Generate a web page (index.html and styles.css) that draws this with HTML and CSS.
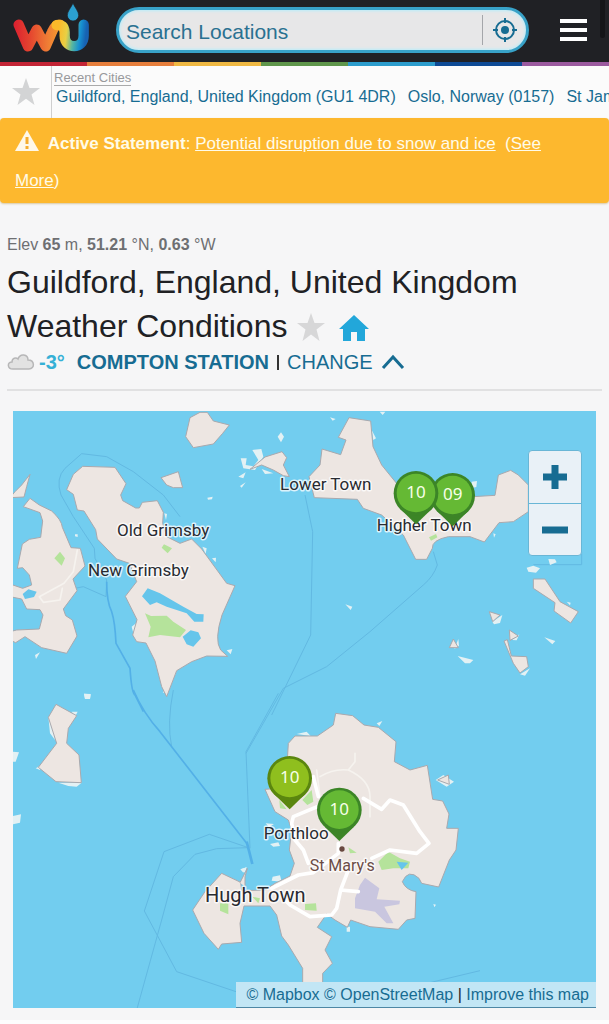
FILE: index.html
```html
<!DOCTYPE html>
<html lang="en">
<head>
<meta charset="utf-8">
<meta name="viewport" content="width=device-width, initial-scale=1">
<title>Guildford, England, United Kingdom Weather Conditions</title>
<link rel="stylesheet" href="styles.css">
</head>
<body>
<header class="header">
  <a class="logo" href="#" aria-label="Weather Underground">
    <svg width="80" height="52" viewBox="36 2 240 156" fill="none" stroke-width="31" stroke-linecap="round" stroke-linejoin="round">
      <defs>
        <linearGradient id="gw" gradientUnits="userSpaceOnUse" x1="45" y1="0" x2="195" y2="0"><stop offset="0" stop-color="#dc2230"/><stop offset=".3" stop-color="#e5452f"/><stop offset=".65" stop-color="#ef7c35"/><stop offset="1" stop-color="#f8a92d"/></linearGradient>
        <linearGradient id="gu" gradientUnits="userSpaceOnUse" x1="175" y1="90" x2="258" y2="100"><stop offset="0" stop-color="#fbb92a"/><stop offset=".3" stop-color="#e9d044"/><stop offset=".55" stop-color="#58b7a0"/><stop offset=".8" stop-color="#1790d0"/><stop offset="1" stop-color="#1762b2"/></linearGradient>
      </defs>
      <path d="M56 73 84 138 110 88 137 138 156 95Q165 73 180 73" stroke="url(#gw)"/>
      <path d="M170 74Q192 70 194 96V106C194 148 251 148 251 106V73" stroke="url(#gu)"/>
      <path d="M219 8C214 22 202 32 202 45a17 17 0 0 0 34 0C236 32 224 22 219 8Z" fill="#2ba0d0" stroke="#202125" stroke-width="2"/>
    </svg>
  </a>
  <form class="search" role="search">
    <input class="search-input" type="text" aria-label="Search Locations" placeholder="Search Locations">
    <button class="locate" type="button" aria-label="Use my location">
      <svg width="26" height="26" viewBox="0 0 26 26" fill="none" stroke="#176c92" stroke-width="2"><circle cx="13" cy="13" r="9"/><circle cx="13" cy="13" r="4" fill="#176c92" stroke="none"/><path d="M13 1v5M13 20v5M1 13h5M20 13h5"/></svg>
    </button>
  </form>
  <button class="menu" type="button" aria-label="Menu"><span></span><span></span><span></span></button>
</header>
<div class="rainbow"><i class="red"></i><i class="orange"></i><i class="yellow"></i><i class="green"></i><i class="sky"></i><i class="blue"></i><i class="purple"></i></div>
<nav class="recent" aria-label="Recent cities">
  <button class="fav" type="button" aria-label="Favorites"><svg width="30" height="30" viewBox="0 0 30 30"><path d="M15 1 18.5 11H29L20.500 17.500 23.500 28 15 21.800 6.500 28 9.500 17.500 1 11H11.500Z" fill="#d3d4d5"/></svg></button>
  <div class="recent-body">
    <span class="recent-title">Recent Cities</span>
    <div class="recent-links"><a href="#">Guildford, England, United Kingdom (GU1 4DR)</a><a href="#">Oslo, Norway (0157)</a><a href="#">St James, Barbados</a></div>
  </div>
</nav>
<section class="alert" role="status">
  <svg class="warn" width="24" height="21" viewBox="0 0 24 21"><path d="M12 0 24 21H0Z" fill="#fff8e8"/><path d="M12 7v7M12 16v3" stroke="#f5ad2e" stroke-width="3"/></svg>
  <b>Active Statement</b>: <a href="#">Potential disruption due to snow and ice</a>&nbsp; (<a href="#">See More</a>)
</section>
<main class="main">
  <p class="elev">Elev <b>65</b> m, <b>51.21</b> °N, <b>0.63</b> °W</p>
  <h1 class="title">Guildford, England, United Kingdom Weather Conditions
    <button class="icon" type="button" aria-label="Add to favorites"><svg width="30" height="30" viewBox="0 0 30 30"><path d="M15 1 18.500 11H29L20.500 17.500 23.500 29 15 22.500 6.500 29 9.500 17.500 1 11H11.500Z" fill="#d7d7d8"/></svg></button>
    <button class="icon" type="button" aria-label="Set as home"><svg width="30" height="28" viewBox="0 0 30 28"><path d="M15 1 30 15H26V27H18V18H12V27H4V15H0Z" fill="#22a7da"/></svg></button>
  </h1>
  <div class="station">
    <svg width="28" height="18" viewBox="0 0 28 18"><path d="M6 16C0 16 0 9 5 9 5 5 9 4 11 6 13 0 21 1 21 7 28 7 28 16 22 16Z" fill="#e2e2e2" stroke="#b7b7b8" stroke-width="1.500"/></svg>
    <span class="temp">-3°</span>
    <a class="name" href="#">COMPTON STATION</a>
    <span class="bar"></span>
    <button class="change" type="button">CHANGE <svg width="24" height="16" viewBox="0 0 24 16"><path d="M2 14 12 3 22 14" fill="none" stroke="#176c92" stroke-width="3"/></svg></button>
  </div>
  <section class="map" aria-label="Station map">
    <svg class="map-art" viewBox="0 0 1749 1791">
      <defs>
        <g id="pin"><path d="M-44 50 0 93 44 50Z" class="pin-rim"/><circle r="67" class="pin-rim"/><circle r="58" cy="-1" class="pin-face"/></g>
      </defs>
      <rect width="1749" height="1791" fill="#72cdef"/>
      <!-- north-west islands -->
      <g transform="translate(-39 -18)">
        <g class="route">
          <path d="M285 460 283 430 220 335 183 270Q166 220 195 190L245 146 320 155 400 200 490 270 540 335"/>
          <path d="M285 460 320 525 318 575 250 545 225 550"/>
        </g>
        <g class="rock">
          <path d="M722 160 740 160 737 180 760 184 775 165 757 135 784 132 790 155 765 195 730 190Z"/>
          <path d="M833 95 843 82 852 95 843 112Z"/><path d="M715 215 737 202 730 220ZM720 243 737 232 725 248Z"/>
          <path d="M622 278 638 275 636 283 624 284ZM225 388l8 0 0 8-8-2ZM636 460 648 458 647 472ZM252 866 272 868 270 882 255 882ZM105 750 120 742 108 762ZM785 192 820 205 795 207ZM493 325l8 2-3 18Z"/>
          <path d="M680 736 697 732 692 748ZM488 863 503 862 520 820 530 800 500 845ZM395 665 408 655 413 672 403 696ZM607 425 620 430 617 446Z"/>
        </g>
        <g class="land">
          <path d="M570 38 600 22 622 22 640 48 688 60 668 85 640 117 580 128 557 95Z"/>
          <path d="M483 218 535 200 548 248 520 248 500 240Z"/>
          <path d="M750 193 795 156 846 140 860 158 850 180 868 215 850 212 820 195 785 180Z"/>
          <path d="M30 278 45 260 65 240 90 208 80 245 72 276Z"/>
          <path d="M70 305 90 280 118 300 155 318Q185 345 187 367L213 428 241 430 255 483 219 522 231 557 190 612 197 632 217 645 231 693 200 745 125 728 75 695 47 713 30 705V680L50 675 118 672 129 630 120 614 80 612 65 582 30 575V537L68 550 95 540 88 510 68 488 52 490 67 417 88 403 122 397 128 348 120 323Z"/>
          <path d="M200 254 220 208 248 184 345 187 378 236 362 270 368 287 407 309 418 309 427 292 472 287 490 322 488 355 500 395 540 415 575 402 605 432 680 535 705 542 666 630Q642 705 662 735L683 754 620 753 575 770 530 797 500 875 485 845 465 768 438 714 410 710 398 690 411 644 376 574 410 530 388 475 350 462 292 402 287 374 252 318 232 315 220 268Z"/>
        </g>
        <path class="lake" d="M68 567 85 553 110 560 102 576 75 582ZM426 574 443 550 480 565 550 605 590 627 611 628 610 650 583 650 560 625 500 605 470 592 450 600ZM548 695 572 676 595 682 603 700 580 725 560 718Z"/>
        <path class="park" d="M163 460 180 440 195 460 185 482ZM485 428 492 418 516 430 503 445ZM435 625 453 633 500 632 520 650 558 675 540 697 480 690 445 697 452 665Z"/>
        <path class="road faint" d="M232 435 220 500 192 535 118 575 130 592 180 585 187 550"/>
        <path class="ferry" d="M320 530Q320 590 335 620 345 650 348 715L390 790Q395 865 405 870L430 920"/>
      </g>
      <!-- north-east islands -->
      <g transform="translate(861 -18)">
        <path class="route" d="M15 270 38 380 32 690-85 930M400 440 412 480Q400 515 370 540L210 680 80 785-50 850-162 1045M845 440V479H700"/>
        <g class="rock">
          <path d="M680 488 700 482 720 490 708 503 685 500ZM745 462 765 463 770 472 750 480ZM90 37l17 5-9 5ZM215 75 228 100 220 105ZM136 598 157 605 152 615ZM515 230l16-2-2 18-14 3ZM577 650 607 630 600 654 582 658ZM733 697 766 708 757 718ZM473 753 520 765 510 775 495 775ZM636 705 658 688 650 706ZM660 808 690 790 675 812ZM463 732 475 702 477 722ZM800 590l12 3-2 8ZM580 385l7 3-5 10ZM239 20h17l-8 10Z"/>
        </g>
        <g class="land">
          <path d="M147 38 212 48 219 125 245 180 310 260 440 275 520 275 585 271 595 210 632 196 655 210 685 240V320L640 350 597 353 553 411 510 395 445 395Q395 405 397 430L380 463 347 463 310 390 245 330 190 310 172 283 43 278 27 215 60 180 66 132 122 149 138 105 115 97Z"/>
          <path d="M700 522 735 522 780 590 835 620 812 654 762 618 765 593 700 550Z"/>
          <path d="M568 620 600 630 578 650ZM628 675 655 693 630 706ZM460 702 475 728 448 728ZM612 708 622 704 634 753 680 755 685 785 660 804 640 775Z"/>
        </g>
        <path class="park" d="M387 397 408 387 412 397 393 407Z"/>
      </g>
      <!-- south-west islands and sea routes -->
      <g transform="translate(-39 837)">
        <g class="route">
          <path d="M745 473 628 433 492 485 433 663 530 845 708 905M745 473 650 476 585 493 520 560 485 690 410 960M520 0Q500 100 515 170M750 475 738 185 835 10"/>
        </g>
        <path class="ferry" d="M400 0Q430 70 480 125L740 460"/><path class="ferry strong" d="M740 455 757 522"/>
        <g class="rock"><path d="M215 65 233 65 225 80ZM175 278 245 278 230 290 205 288ZM107 235 125 225 120 240ZM39 185 57 187 47 215H39ZM39 378 63 373 60 398 39 403ZM145 80 150 130 165 150 158 100ZM722 538 740 532 735 548ZM252 11 272 12 270 26 255 26Z"/></g>
        <g class="land"><path d="M168 43 230 77 205 115 200 160 237 195 244 278 168 275 115 232 170 160 145 82Z"/></g>
      </g>
      <!-- St Mary's -->
      <g transform="translate(501 837)">
        <path class="route" d="M720 885 900 842"/>
        <g class="rock"><path d="M767 270 790 255 822 275 800 290ZM270 462 295 457 300 468 280 470ZM181 538 200 532 190 548ZM278 560 300 556 305 575 275 572ZM425 735 453 738 440 752ZM590 100 607 93 598 108ZM760 642l8 2-5 8ZM350 132 380 125 392 138ZM337 780 350 785 345 795ZM500 710h10v15h-10ZM395 880h20l-8 14ZM257 400l25 2-15 10Z"/></g>
        <g class="land">
          <path d="M467 70 518 77 552 105 595 112 648 155 643 215 690 240 742 226 758 328 788 333 807 372 800 415 835 415 828 480 808 510 776 591 725 580 717 565Q685 535 667 575 677 600 708 605L705 685 680 690 655 718 570 710 512 690 502 712 465 690 440 672 412 712 455 740 435 780 457 820 428 850V880H368V835L325 765 305 738 290 675 270 648 192 648 180 700 185 757 125 762 115 778 72 730 38 660 75 605 125 550 182 577 185 602 255 600 285 580 330 558 343 520 328 480 335 420 325 390 285 365 255 298 300 295 322 210 325 160 345 138 412 138 460 105Z"/>
          <path d="M773 270 805 255 808 283ZM180 578 202 535 195 560V590"/>
        </g>
        <path class="park" d="M298 330 320 358 300 355ZM367 330 395 300 400 335 382 345ZM505 472 530 488 510 490ZM595 515 625 485 660 505 690 515 685 535 640 535 605 540ZM120 640 145 640V673L120 662ZM375 642 408 640 410 662 375 660ZM217 620 240 625 235 640Z"/>
        <path class="lake" d="M650 515 685 518 665 540Z"/>
        <path fill="#c9c6df" d="M555 563 598 595 590 628 660 632 658 643 613 650 640 700 620 700 585 665 525 655 525 625 540 585Z"/>
        <g class="road">
          <path class="faint" d="M410 240 420 320M420 260Q460 235 505 240 570 270 570 320V380M525 190 525 215 505 240"/>
          <path d="M550 325 605 358 630 330 670 345 720 425 747 460 710 490 630 480 575 505M400 260 415 320M460 330 340 380 335 400 345 450 370 480 385 520M275 595 355 555 400 548 475 490 475 460M507 535 482 600 470 655 455 675 390 680 330 645 310 625M482 600 535 605"/>
        </g>
        <circle cx="486" cy="477" r="8" fill="#68483f"/>
      </g>
      <g class="label">
        <text x="312" y="375">Old Grimsby</text>
        <text x="225" y="495">New Grimsby</text>
        <text x="801" y="236">Lower Town</text>
        <text x="1091" y="361">Higher Town</text>
        <text x="752" y="1284">Porthloo</text>
        <text class="site" x="890" y="1379">St Mary's</text>
        <text class="town" x="576" y="1474">Hugh Town</text>
      </g>
      <g class="pins">
        <g transform="translate(1319 253)"><use href="#pin"/><text y="14">09</text></g>
        <g transform="translate(1209 247)"><use href="#pin"/><text y="14">10</text></g>
        <g class="lime" transform="translate(830 1102)"><use href="#pin"/><text y="14">10</text></g>
        <g transform="translate(979 1197)"><use href="#pin"/><text y="14">10</text></g>
      </g>
    </svg>
    <div class="zoom">
      <button type="button" aria-label="Zoom in"><svg width="26" height="26" viewBox="0 0 26 26"><path d="M13 1v24M1 13h24" stroke="#176c92" stroke-width="7"/></svg></button>
      <button type="button" aria-label="Zoom out"><svg width="26" height="26" viewBox="0 0 26 26"><path d="M0 13h26" stroke="#176c92" stroke-width="7"/></svg></button>
    </div>
    <div class="credit"><a href="#">© Mapbox</a> <a href="#">© OpenStreetMap</a> | <a href="#">Improve this map</a></div>
  </section>
</main>
<footer class="foot"></footer>
</body>
</html>
```
FILE: styles.css
```css
* { box-sizing: border-box; }
body { margin: 0; background: #f6f6f7; color: #202124; font-family: "Liberation Sans", Arial, sans-serif; font-size: 16px; overflow-x: hidden; }
a { color: #176c92; text-decoration: none; }
button { padding: 0; border: 0; background: none; font: inherit; color: inherit; cursor: pointer; }
svg { display: block; }

.header { position: relative; display: flex; align-items: center; gap: 24px; height: 62px; padding: 0 22px 3px 12px; background: #202125; }
.header::after { content: ""; position: absolute; top: 0; right: 4px; width: 5px; height: 38px; border-radius: 0 0 3px 3px; background: #141518; }
.logo { flex: none; margin-top: -6px; }
.search { flex: 1; display: flex; align-items: center; height: 46px; border: 3px solid #38a2c8; border-radius: 23px; background: #e7e7e8; box-shadow: inset 0 0 3px 1px #b9edfa; }
.search-input { flex: 1; min-width: 0; height: 38px; padding: 5px 7px 0; border: 0; background: none; outline: 0; font: 21px "Liberation Sans", Arial, sans-serif; color: #176c92; }
.search-input::placeholder { color: #2a7191; opacity: 1; }
.locate { display: flex; align-items: center; justify-content: center; width: 44px; height: 30px; border-left: 1px solid #a4a6aa; }
.menu { display: flex; flex-direction: column; gap: 5px; width: 27px; margin-left: 7px; }
.menu span { height: 4px; background: #fff; }
.rainbow { display: flex; height: 4px; }
.rainbow i { flex: 1; }
.red { background: #c32435; }
.orange { background: #e67e3c; }
.yellow { background: #efb843; }
.green { background: #5f964b; }
.sky { background: #2c9ccc; }
.blue { background: #0d4a95; }
.purple { background: #9b5a9f; }

.recent { display: flex; height: 52px; background: #fbfbfb; overflow: hidden; }
.fav { flex: none; display: flex; justify-content: center; align-items: center; width: 52px; border-right: 1px solid #cfcfcf; }
.recent-body { padding: 2px 0 0 2px; }
.recent-title { display: inline-block; height: 17px; border-bottom: 1px solid #aaa; color: #98999b; font-size: 13px; line-height: 18px; }
.recent-links { display: flex; gap: 12px; padding-left: 2px; line-height: 22px; white-space: nowrap; }

.alert { padding: 7px 40px 4px 15px; border-radius: 4px; background: #fdb82e; box-shadow: 0 1px 2px #d9c8a0; color: #fffbe8; font-size: 17px; line-height: 37px; }
.alert a { color: #fffbe8; text-decoration: underline; }
.warn { display: inline-block; margin-right: 4px; vertical-align: -2px; }

.main { padding: 32px 7px 0; }
.elev { margin: 0; padding-bottom: 5px; color: #6e6f72; font-size: 16px; line-height: 20px; }
.title { margin: 0; font-size: 32px; font-weight: 400; line-height: 44px; }
.icon { display: inline-block; margin-right: 4px; vertical-align: -5px; }
.station { display: flex; align-items: center; height: 28px; margin-bottom: 13px; font-size: 20px; }
.temp { margin: 0 12px 0 4px; color: #35b0d6; font-weight: 700; font-size: 20px; }
.name { font-weight: 700; }
.bar { width: 2px; height: 15px; margin: 0 8px; background: #333; }
.change { display: flex; align-items: center; gap: 8px; color: #176c92; }
.map { position: relative; margin: 0 6px; }
.map::before { content: ""; display: block; height: 2px; margin: 0 -6px 20px; background: #e1e1e2; }
.map-art { width: 100%; height: auto; overflow: hidden; }

.land { fill: #ede6e2; stroke: #a9a9ae; stroke-width: 3; }
.rock { fill: #e3f1f4; }
.lake { fill: #65c5eb; }
.park { fill: #b5e39b; }
.route { fill: none; stroke: #62b9e2; stroke-width: 3; }
.ferry { fill: none; stroke: #53b0e7; stroke-width: 5; }
.strong { stroke-width: 8; }
.road { fill: none; stroke: #fff; stroke-width: 11; stroke-linejoin: round; stroke-linecap: round; }
.faint { stroke: #f6f3ef; stroke-width: 5; }
.label { font-family: Roboto, sans-serif; font-size: 51px; fill: #282a30; stroke: #fff; stroke-width: 9; stroke-opacity: .75; stroke-linejoin: round; paint-order: stroke; }
.site { fill: #6b4c46; font-size: 48px; }
.town { font-size: 60px; }
.pins { font-family: "Noto Sans", sans-serif; font-size: 51px; text-anchor: middle; fill: #f7ffe8; }
.lime { --rim: #5a860f; --face: #8fbf1e; }
.pin-rim { fill: var(--rim, #3c8527); }
.pin-face { fill: var(--face, #65b934); }

.zoom { position: absolute; top: 61px; right: 14px; width: 54px; border: 1px solid #69b6d6; border-radius: 4px; background: #e9f1f7; }
.zoom button { display: flex; align-items: center; justify-content: center; width: 100%; height: 52px; }
.zoom button + button { border-top: 1px solid #69b6d6; }
.credit { position: absolute; right: 0; bottom: 0; padding: 0 7px 0 10px; border-bottom: 1px solid #4d87a5; background: #c2e6f5; line-height: 25px; white-space: nowrap; }
.foot { height: 16px; border-bottom: 4px solid #fdfdfd; }
```
